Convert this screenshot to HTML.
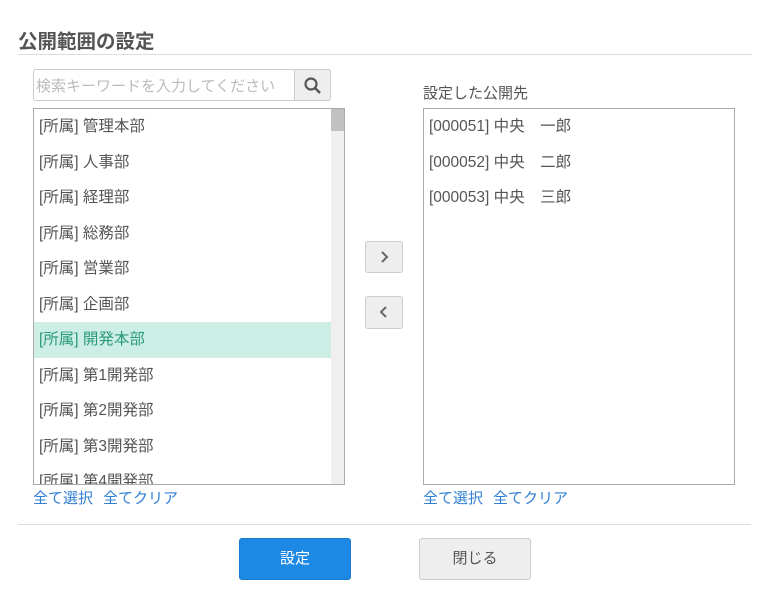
<!DOCTYPE html><html><head><meta charset="utf-8"><style>
*{box-sizing:border-box;margin:0;padding:0}
body{width:770px;height:604px;background:#fff;font-family:"Liberation Sans","Noto Sans CJK JP",sans-serif;position:relative;overflow:hidden;color:#555}
.a{position:absolute}
h1{position:absolute;left:18px;top:25px;font-size:19.5px;font-weight:bold;color:#555}
.hr{position:absolute;height:1px;background:#ddd}
.box{position:absolute;border:1px solid #aaa;background:#fff;overflow:hidden}
.it{height:35.5px;line-height:35px;padding-left:5px;font-size:15.5px;color:#555;white-space:nowrap}
.sel{background:#cdeee5;color:#2a9a7a}
.lk{position:absolute;font-size:15px;color:#2f7fd6;top:487px}
.btn{position:absolute;border:1px solid #ccc;border-radius:3px;background:#eee;text-align:center}
</style></head><body>
<h1>公開範囲の設定</h1>
<div class="hr" style="left:18px;top:54px;width:734px"></div>
<div class="a" style="left:33px;top:69px;width:298px;height:32px;border:1px solid #ccc;border-radius:3px;background:#fff"></div>
<div class="a" style="left:36px;top:75px;font-size:15px;color:#bbb">検索キーワードを入力してください</div>
<div class="a" style="left:294px;top:69px;width:37px;height:32px;border:1px solid #ccc;border-radius:0 3px 3px 0;background:#eee"><svg width="37" height="32"><circle cx="16" cy="14" r="5.5" fill="none" stroke="#555" stroke-width="2.2"/><line x1="20" y1="18" x2="25" y2="23" stroke="#555" stroke-width="2.5"/></svg></div>
<div class="box" style="left:33px;top:108px;width:312px;height:377px">
<div class="it">[所属] 管理本部</div><div class="it">[所属] 人事部</div><div class="it">[所属] 経理部</div><div class="it">[所属] 総務部</div><div class="it">[所属] 営業部</div><div class="it">[所属] 企画部</div><div class="it sel" style="width:297px">[所属] 開発本部</div><div class="it">[所属] 第1開発部</div><div class="it">[所属] 第2開発部</div><div class="it">[所属] 第3開発部</div><div class="it">[所属] 第4開発部</div>
<div class="a" style="left:297px;top:0;width:14px;height:377px;background:#efefef"></div>
<div class="a" style="left:297px;top:0;width:14px;height:22px;background:#c1c1c1"></div>
</div>
<div class="btn" style="left:365px;top:241px;width:38px;height:32px"><svg width="36" height="30"><path d="M16 10l5 5-5 5" fill="none" stroke="#666" stroke-width="2"/></svg></div>
<div class="btn" style="left:365px;top:296px;width:38px;height:33px"><svg width="36" height="31"><path d="M20 10l-5 5 5 5" fill="none" stroke="#666" stroke-width="2"/></svg></div>
<div class="a" style="left:423px;top:82px;font-size:15px;color:#555">設定した公開先</div>
<div class="box" style="left:423px;top:108px;width:312px;height:377px">
<div class="it">[000051] 中央　一郎</div><div class="it">[000052] 中央　二郎</div><div class="it">[000053] 中央　三郎</div>
</div>
<div class="lk" style="left:33px">全て選択</div><div class="lk" style="left:103px">全てクリア</div>
<div class="lk" style="left:423px">全て選択</div><div class="lk" style="left:493px">全てクリア</div>
<div class="hr" style="left:18px;top:524px;width:733px"></div>
<div class="btn" style="left:239px;top:538px;width:112px;height:42px;background:#1e88e5;border-color:#1a7ad0;color:#fff;line-height:40px;font-size:15px">設定</div>
<div class="btn" style="left:419px;top:538px;width:112px;height:42px;line-height:40px;font-size:15px;color:#555">閉じる</div>
</body></html>
